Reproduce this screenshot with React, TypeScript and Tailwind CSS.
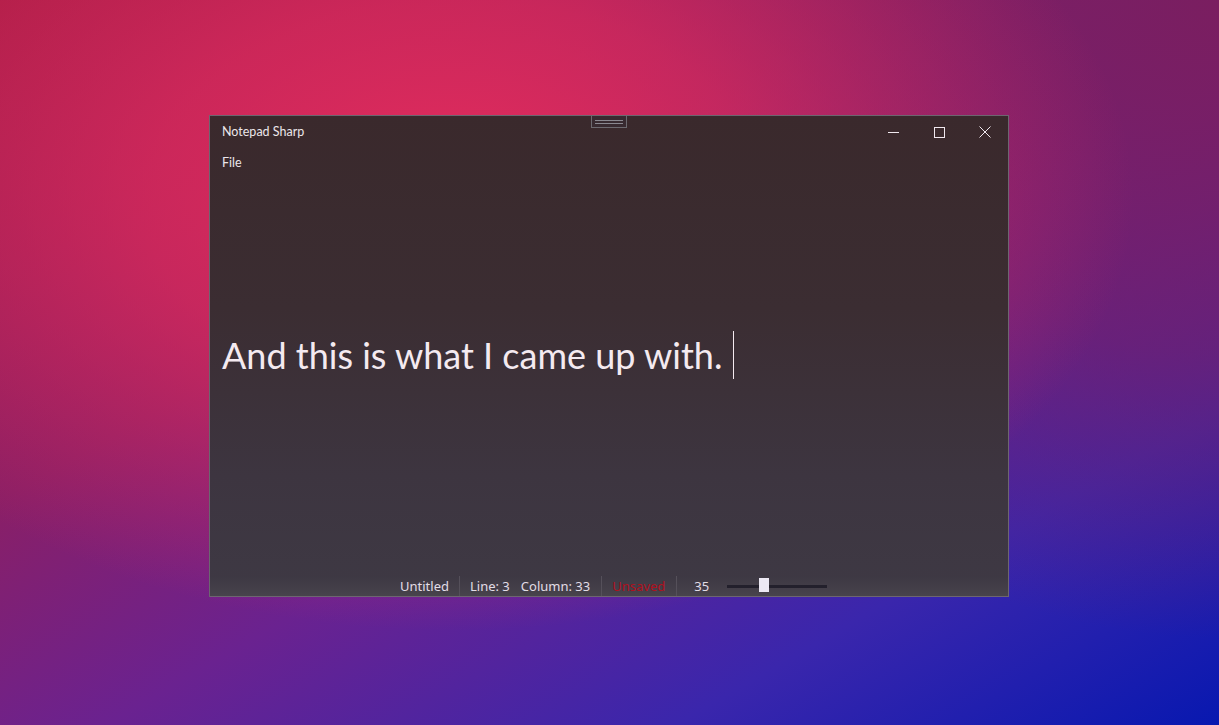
function Sep() {
  return <div className="w-px self-stretch bg-[#55505a]" />;
}

export default function App() {
  return (
    <div className="flex h-[725px] w-[1219px] overflow-hidden bg-[radial-gradient(ellipse_56%_60%_at_37%_27%,#e52c5c_0%,rgba(229,44,92,0.65)_45%,rgba(229,44,92,0)_100%),radial-gradient(circle_at_100%_0%,#7a1e60_0%,rgba(122,30,96,0.6)_25%,rgba(122,30,96,0)_45%),linear-gradient(150deg,#a81c46_0%,#8a1f66_35%,#6a2290_55%,#3a26ac_78%,#0818b0_100%)] pl-[209px] pt-[115px] font-['Noto_Sans',sans-serif]">
      <div className="relative flex h-[482px] w-[800px] flex-col border border-[#6d6670] bg-[linear-gradient(180deg,#3a292c_0%,#3b2d32_40%,#3d3540_75%,#3e3944_100%)] text-[#f0e8ee]">
        {/* drag handle */}
        <div className="absolute left-[381px] top-[-1px] flex h-[13px] w-[36px] flex-col items-center justify-center gap-[2px] border border-[#6d6a70] bg-[#382a30]">
          <div className="h-px w-[28px] bg-[#8a8890]" />
          <div className="h-px w-[28px] bg-[#8a8890]" />
        </div>

        {/* title bar */}
        <div className="flex h-[32px] items-center">
          <div className="pl-[12px] font-['Lato',sans-serif] text-[12.5px] text-[#ece6ea]">Notepad Sharp</div>
          <div className="ml-auto flex h-full">
            <div className="flex w-[46px] items-center justify-center">
              <svg width="11" height="11" viewBox="0 0 11 11">
                <path d="M0 5.5h11" stroke="#f0e8ee" strokeWidth="1" />
              </svg>
            </div>
            <div className="flex w-[46px] items-center justify-center">
              <svg width="11" height="11" viewBox="0 0 11 11">
                <rect x="0.5" y="0.5" width="10" height="10" fill="none" stroke="#f0e8ee" strokeWidth="1" />
              </svg>
            </div>
            <div className="flex w-[46px] items-center justify-center">
              <svg width="12" height="12" viewBox="0 0 12 12">
                <path d="M0.5 0.5l11 11M11.5 0.5l-11 11" stroke="#f0e8ee" strokeWidth="1" />
              </svg>
            </div>
          </div>
        </div>

        {/* menu */}
        <div className="flex h-[31px] items-center pl-[12px] font-['Lato',sans-serif] text-[12.5px] text-[#ece6ea]">File</div>

        {/* editor */}
        <div className="flex-1 pl-[12px] pt-[152px]">
          <div className="flex h-[48px] items-center font-['Lato',sans-serif] text-[36px] leading-[48px] text-[#f4eaf0]">
            <span>And this is what I came up with.</span>
            <span className="ml-[11px] h-[48px] w-px bg-[#f4eaf0]" />
          </div>
        </div>

        {/* status bar */}
        <div className="flex h-[20px] items-stretch bg-[linear-gradient(180deg,#3d3843_0%,#47434c_100%)] text-[13px] leading-[20px] text-[#e2dde6]">
          <div className="w-[190px]" />
          <span className="pr-[10px]">Untitled</span>
          <Sep />
          <span className="pl-[10px] pr-[11px]">Line: 3</span>
          <span className="pr-[11px]">Column: 33</span>
          <Sep />
          <span className="pl-[10px] pr-[11px] text-[#b0101e]">Unsaved</span>
          <Sep />
          <span className="pl-[17px] pr-[18px]">35</span>
          <div className="relative flex w-[100px] items-center">
            <div className="h-[3px] w-full bg-[#23202c]" />
            <div className="absolute left-[32px] top-[2px] h-[14px] w-[10px] bg-[#ece8f4]" />
          </div>
        </div>
      </div>
    </div>
  );
}
